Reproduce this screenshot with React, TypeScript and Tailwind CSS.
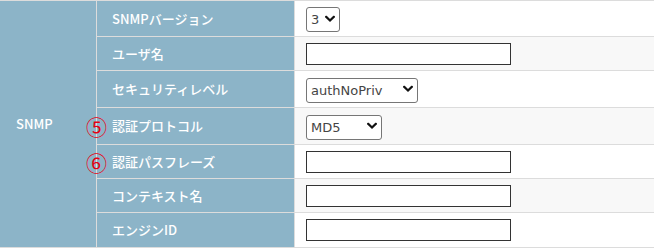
import React from "react";

const JP = { fontFamily: '"Noto Sans CJK JP", "Noto Sans", sans-serif' };
const CTRL = { fontFamily: '"DejaVu Sans", Verdana, sans-serif' };

function Chevron() {
  return (
    <svg
      className="pointer-events-none absolute right-[5px] top-1/2 -translate-y-1/2"
      width="10"
      height="7"
      viewBox="0 0 10 7"
    >
      <path d="M1.2 1.3 L5 5 L8.8 1.3" fill="none" stroke="#111" strokeWidth="2.2" strokeLinecap="square" />
    </svg>
  );
}

function Select({ value, options, width }: { value: string; options: string[]; width: string }) {
  return (
    <div className={`relative h-[25px] ${width}`}>
      <select
        defaultValue={value}
        style={CTRL}
        className="h-full w-full appearance-none rounded-[3px] border border-[#767676] bg-white pl-[4px] text-[13px] leading-none text-[#444] outline-none"
      >
        {options.map((o) => (
          <option key={o}>{o}</option>
        ))}
      </select>
      <Chevron />
    </div>
  );
}

function TextInput() {
  return <input type="text" className="h-[22px] w-[205px] border border-[#333] bg-white outline-none" />;
}

type Row = { label: string; h: string; bg: string; mark?: string; control: React.ReactNode };

export default function App() {
  const rows: Row[] = [
    {
      label: "SNMPバージョン",
      h: "h-[36px]",
      bg: "bg-white",
      control: <Select value="3" options={["1", "2c", "3"]} width="w-[34px]" />,
    },
    { label: "ユーザ名", h: "h-[34px]", bg: "bg-[#f8f8f8]", control: <TextInput /> },
    {
      label: "セキュリティレベル",
      h: "h-[37px]",
      bg: "bg-white",
      control: <Select value="authNoPriv" options={["noAuthNoPriv", "authNoPriv", "authPriv"]} width="w-[112px]" />,
    },
    {
      label: "認証プロトコル",
      h: "h-[37px]",
      bg: "bg-[#f8f8f8]",
      mark: "⑤",
      control: <Select value="MD5" options={["MD5", "SHA"]} width="w-[76px]" />,
    },
    { label: "認証パスフレーズ", h: "h-[34px]", bg: "bg-white", mark: "⑥", control: <TextInput /> },
    { label: "コンテキスト名", h: "h-[34px]", bg: "bg-[#f8f8f8]", control: <TextInput /> },
    { label: "エンジンID", h: "h-[34px]", bg: "bg-white", control: <TextInput /> },
  ];

  return (
    <div className="w-[654px] bg-white">
      <div className="flex border-y border-[#dcdcdc]">
        <div
          style={JP}
          className="flex w-[96px] shrink-0 items-center bg-[#8cb4c8] pl-[16px] text-[13px] font-medium text-white"
        >
          SNMP
        </div>
        <div className="flex flex-1 flex-col divide-y divide-[#dcdcdc] border-l border-[#dcdcdc]">
          {rows.map((r) => (
            <div key={r.label} className={`flex ${r.h}`}>
              <div
                style={JP}
                className="relative flex w-[197px] shrink-0 items-center bg-[#8cb4c8] pl-[15px] text-[13px] font-medium text-white"
              >
                {r.mark && (
                  <span className="absolute left-[-11px] top-1/2 -translate-y-1/2 text-[21px] font-normal leading-none text-[#e60012]">
                    {r.mark}
                  </span>
                )}
                {r.label}
              </div>
              <div className={`flex flex-1 items-center border-l border-[#dcdcdc] pl-[11px] ${r.bg}`}>{r.control}</div>
            </div>
          ))}
        </div>
      </div>
    </div>
  );
}
